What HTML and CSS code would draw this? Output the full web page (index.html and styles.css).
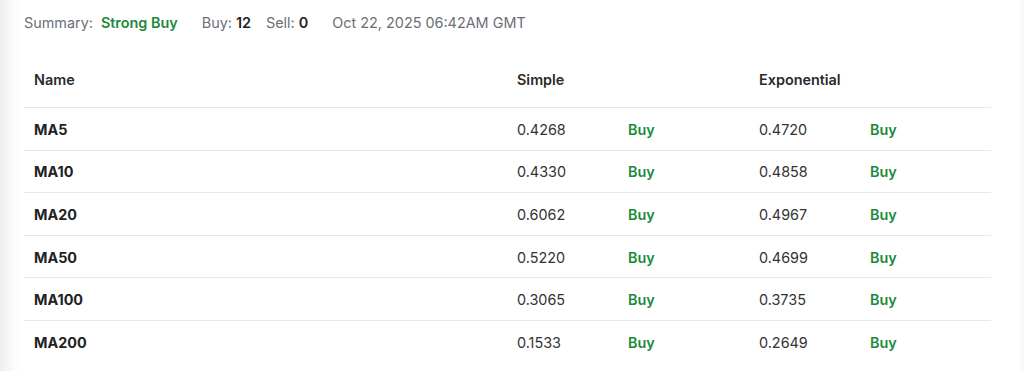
FILE: index.html
```html
<!DOCTYPE html>
<html>
<head>
<meta charset="utf-8">
<link rel="stylesheet" href="styles.css">
</head>
<body>
<div class="page">
  <div class="summary">
    <span class="lbl">Summary:</span>
    <span class="strong">Strong Buy</span>
    <span class="count buy">Buy: <b>12</b></span>
    <span class="count sell">Sell: <b>0</b></span>
    <span class="date">Oct 22, 2025 06:42AM GMT</span>
  </div>
  <div class="table">
    <div class="row head">
      <div class="c name">Name</div>
      <div class="c span2">Simple</div>
      <div class="c span2">Exponential</div>
    </div>
    <div class="row"><div class="c name">MA5</div><div class="c val">0.4268</div><div class="c sig">Buy</div><div class="c val">0.4720</div><div class="c sig">Buy</div></div>
    <div class="row"><div class="c name">MA10</div><div class="c val">0.4330</div><div class="c sig">Buy</div><div class="c val">0.4858</div><div class="c sig">Buy</div></div>
    <div class="row"><div class="c name">MA20</div><div class="c val">0.6062</div><div class="c sig">Buy</div><div class="c val">0.4967</div><div class="c sig">Buy</div></div>
    <div class="row"><div class="c name">MA50</div><div class="c val">0.5220</div><div class="c sig">Buy</div><div class="c val">0.4699</div><div class="c sig">Buy</div></div>
    <div class="row"><div class="c name">MA100</div><div class="c val">0.3065</div><div class="c sig">Buy</div><div class="c val">0.3735</div><div class="c sig">Buy</div></div>
    <div class="row last"><div class="c name">MA200</div><div class="c val">0.1533</div><div class="c sig">Buy</div><div class="c val">0.2649</div><div class="c sig">Buy</div></div>
  </div>
</div>
</body>
</html>
```
FILE: styles.css
```css
html, body {
  margin: 0;
  padding: 0;
  height: 100%;
}
body {
  background: linear-gradient(to right, #eeeeee 0px, #fafafa 12px, #ffffff 22px, #ffffff calc(100% - 6px), #f6f6f6 100%);
  font-family: Inter, "Noto Sans", sans-serif;
  color: #222;
  overflow: hidden;
}
.page {
  padding: 13px 34px 0 24px;
}
.summary {
  display: flex;
  align-items: baseline;
  font-size: 14.4px;
  color: #6b6f76;
  height: 20px;
  line-height: 20px;
}
.summary .lbl { margin-right: 8px; }
.summary .strong { color: #1c8a3b; font-weight: 600; margin-right: 24px; }
.summary .buy { margin-right: 15px; }
.summary .sell { margin-right: 24px; }
.summary .count b { color: #222; font-weight: 600; }
.table {
  margin-top: 25px;
  width: 967px;
}
.row {
  display: grid;
  grid-template-columns: 483px 111px 131px 111px 131px;
  height: 42.6px;
  align-items: center;
  padding-top: 2px;
  border-bottom: 1px solid #e8e8e8;
  font-size: 14.4px;
  box-sizing: border-box;
}
.row.head {
  height: 50px;
  align-items: start;
  padding-top: 12px;
  grid-template-columns: 483px 242px 242px;
}
.row.last { border-bottom: none; }
.c { padding-left: 10px; line-height: 20px; }
.name { font-weight: 700; color: #222; }
.head .c { font-weight: 600; color: #2a2a2a; }
.val { color: #333; }
.sig { color: #1c8a3b; font-weight: 600; }
```
